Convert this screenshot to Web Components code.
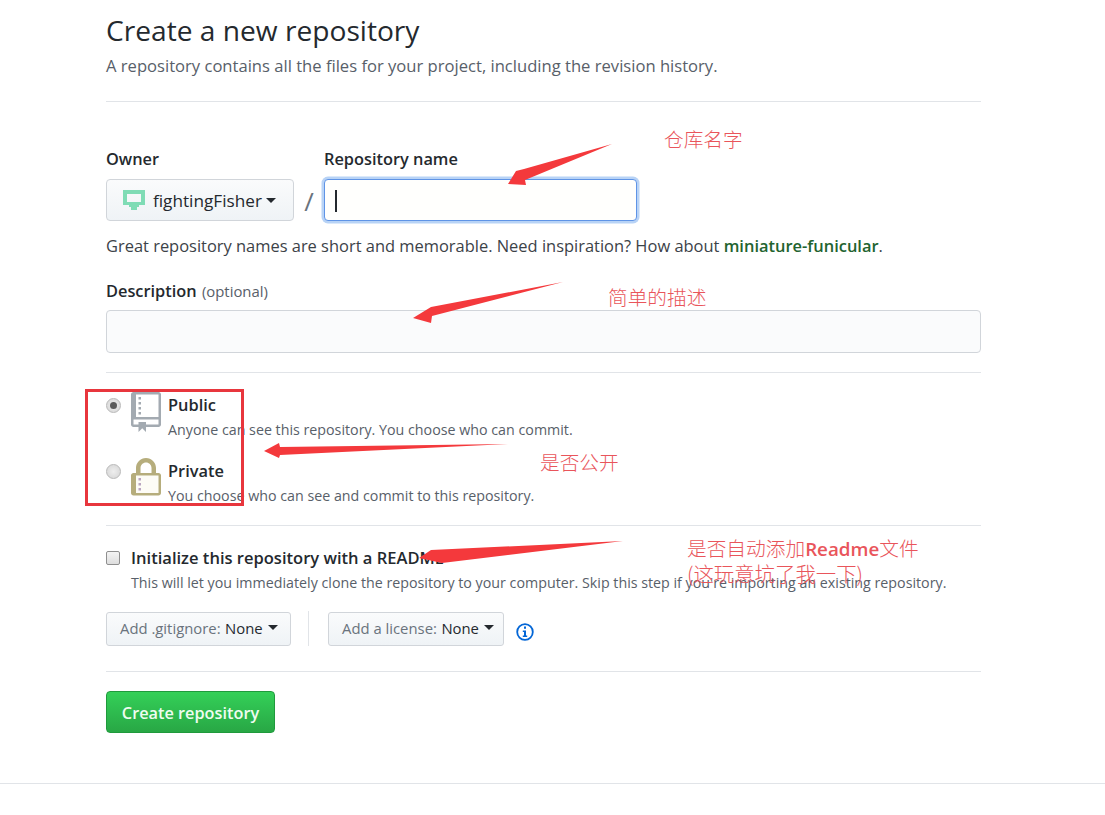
<!DOCTYPE html>
<html lang="en">
<head>
<meta charset="utf-8">
<title>Create a new repository</title>
<style>
  html, body { margin: 0; padding: 0; background: #fff; }
  body { font-family: "Open Sans", "Noto Sans CJK SC", sans-serif; color: #24292e; }
</style>
</head>
<body>
<new-repo-page></new-repo-page>

<script>
const CARET = `<span class="caret"></span>`;

class GhSelect extends HTMLElement {
  constructor() {
    super();
    this.attachShadow({ mode: "open" }).innerHTML = `
      <style>
        :host { display: inline-flex; align-items: center; box-sizing: border-box; height: 34px; padding: 0 0 2px 13px;
          border: 1px solid #d1d5da; border-radius: 3px; background: linear-gradient(#fafbfc, #eff3f6);
          font-size: 14.85px; color: #6a737d; white-space: nowrap; }
        b { font-weight: 400; color: #24292e; margin-left: 4.5px; }
        .caret { width: 0; height: 0; margin-left: 5px; border: 5px solid transparent; border-top-color: #24292e; border-bottom: 0; }
      </style>
      <slot></slot><b>${this.getAttribute("value")}</b>${CARET}`;
  }
}
customElements.define("gh-select", GhSelect);

class VisibilityOption extends HTMLElement {
  constructor() {
    super();
    const checked = this.hasAttribute("checked");
    this.attachShadow({ mode: "open" }).innerHTML = `
      <style>
        :host { display: grid; grid-template-columns: 15px 30px 1fr; column-gap: 10px; height: 66px; }
        .radio { box-sizing: border-box; width: 15px; height: 15px; margin-top: 5px; border-radius: 50%;
          border: 1px solid #b9b9b9; background: radial-gradient(#eee, #d4d4d4); display: flex; align-items: center; justify-content: center; }
        .radio i { width: 7px; height: 7px; border-radius: 50%; background: #5a5a5a; }
        .body { margin-left: -3px; }
        .title { font-size: 16.4px; font-weight: 600; line-height: 24px; margin-top: 0; }
        .note { font-size: 14.25px; line-height: 20px; margin-top: 3px; color: #586069; white-space: nowrap; }
      </style>
      <div class="radio">${checked ? "<i></i>" : ""}</div>
      <slot name="icon"></slot>
      <div class="body">
        <div class="title">${this.getAttribute("label")}</div>
        <div class="note"><slot></slot></div>
      </div>`;
  }
}
customElements.define("visibility-option", VisibilityOption);

class ReadmeCheck extends HTMLElement {
  constructor() {
    super();
    this.attachShadow({ mode: "open" }).innerHTML = `
      <style>
        :host { display: grid; grid-template-columns: 14px 1fr; column-gap: 11px; }
        .box { box-sizing: border-box; width: 14px; height: 14px; margin-top: 5px; border: 1px solid #8f8f8f; border-radius: 2px; background: linear-gradient(#f4f4f4, #dedede); }
        .title { font-size: 16.55px; font-weight: 600; line-height: 24px; white-space: nowrap; }
        .note { font-size: 14.25px; line-height: 20px; margin-top: 3px; color: #586069; white-space: nowrap; }
      </style>
      <div class="box"></div>
      <div>
        <div class="title"><slot name="title"></slot></div>
        <div class="note"><slot></slot></div>
      </div>`;
  }
}
customElements.define("readme-check", ReadmeCheck);

class NoteOverlay extends HTMLElement {
  constructor() {
    super();
    this.attachShadow({ mode: "open" }).innerHTML = `
      <style>
        :host { position: absolute; inset: 0; display: block; pointer-events: none; }
        svg { position: absolute; left: 0; top: 0; }
        .note { position: absolute; font: 300 19.7px/24px "Noto Sans CJK SC", sans-serif; color: #e9555b; white-space: nowrap; }
        .note em { font: 600 18.8px/24px "Open Sans", sans-serif; }
      </style>
      <svg width="1105" height="815" viewBox="0 0 1105 815">
        <g fill="#f4393c">
          <polygon points="612,144 524,169 516,171 508,184 526,185 525,180"/>
          <polygon points="563,282 431,307 413,318 431,323 432,316"/>
          <polygon points="508,444 280,447 279,443 264,451 279,458 280,455"/>
          <polygon points="623,541 431,550 419,558 442,563"/>
        </g>
        <rect x="86.5" y="390.5" width="156" height="114" fill="none" stroke="#e8363d" stroke-width="3"/>
      </svg>
      <div class="note" style="left:664px;top:127px">仓库名字</div>
      <div class="note" style="left:608px;top:285px">简单的描述</div>
      <div class="note" style="left:540px;top:450px">是否公开</div>
      <div class="note" style="left:687px;top:536px">是否自动添加<em>Readme</em>文件</div>
      <div class="note" style="left:687px;top:561px;font-size:20.4px">(这玩意坑了我一下)</div>`;
  }
}
customElements.define("note-overlay", NoteOverlay);

class NewRepoPage extends HTMLElement {
  constructor() {
    super();
    this.attachShadow({ mode: "open" }).innerHTML = `
      <style>
        :host { display: block; position: relative; height: 815px; overflow: hidden; }
        .wrap { width: 875px; margin-left: 106px; padding-top: 10px; }
        h1 { margin: 0; font-size: 28.15px; font-weight: 400; line-height: 41px; }
        .sub { margin: 3px 0 0; font-size: 16.6px; line-height: 24px; color: #586069; white-space: nowrap; }
        hr { border: 0; height: 1px; background: #e1e4e8; margin: 0; }
        .label { font-size: 16.35px; font-weight: 600; line-height: 20px; white-space: nowrap; }
        .label small { font-size: 14.9px; font-weight: 400; color: #586069; margin-left: 1px; }
        .names { display: flex; margin-top: 47px; }
        .slash { align-self: flex-end; width: 30px; height: 42px; font-size: 26px; line-height: 44px; text-align: center; color: #6a737d; }
        .field { display: grid; row-gap: 10px; }
        .owner { display: flex; align-items: center; box-sizing: border-box; width: 188px; height: 42px; padding-left: 16px;
          border: 1px solid #d1d5da; border-radius: 4px; background: linear-gradient(#fafbfc, #eff3f6); font-size: 17.2px; }
        .owner svg { margin-right: 8px; }
        .owner .caret { margin-left: 4px; width: 0; height: 0; border: 5px solid transparent; border-top-color: #24292e; border-bottom: 0; }
        .name { box-sizing: border-box; width: 313px; height: 42px; padding: 10px; border: 1.5px solid #5f94e6; border-radius: 4px;
          background: #fffffd; box-shadow: 0 0 0 2.5px #b8d3f6; }
        .name i { display: block; width: 1.5px; height: 22px; background: #24292e; }
        .hint { margin: 15px 0 0; font-size: 16.45px; line-height: 20px; color: #3c4248; white-space: nowrap; }
        .hint b { color: #22632f; font-weight: 600; }
        .desc-label { margin-top: 25px; }
        .desc { box-sizing: border-box; height: 43px; margin-top: 9px; border: 1px solid #d1d5da; border-radius: 4px; background: #fafbfc; }
        .rule-desc { margin-top: 19px; }
        .options { padding-top: 20px; height: 132px; }
        readme-check { margin-top: 20px; }
        .extras { display: flex; align-items: center; margin-top: 18px; height: 35px; }
        .sep { width: 1px; height: 35px; margin: 0 19px 0 17px; background: #e1e4e8; }
        .extras svg { margin: 6px 0 0 12px; }
        .rule-submit { margin-top: 25px; }
        .create { display: flex; align-items: center; justify-content: center; box-sizing: border-box; width: 169px; height: 42px; margin-top: 19px; padding-top: 2px;
          border-radius: 4px; border: 1px solid #1f9a3c; background: linear-gradient(#34d058, #28a745); color: #eefcf0; font-size: 16.3px; font-weight: 600; }
        .foot { position: absolute; left: 0; right: 0; top: 783px; }
      </style>
      <div class="wrap">
        <h1>Create a new repository</h1>
        <p class="sub">A repository contains all the files for your project, including the revision history.</p>
        <hr style="margin-top:23px">
        <div class="names">
          <div class="field">
            <div class="label">Owner</div>
            <div class="owner">
              <svg width="22" height="21" viewBox="0 0 22 21"><path fill="#7fdcb5" d="M0 0h22v15h-6v2h-2v3H8v-3H6v-2H0zM4 4v8h14V4z"/></svg>
              fightingFisher<span class="caret"></span>
            </div>
          </div>
          <div class="slash">/</div>
          <div class="field">
            <div class="label">Repository name</div>
            <div class="name"><i></i></div>
          </div>
        </div>
        <p class="hint">Great repository names are short and memorable. Need inspiration? How about <b>miniature-funicular</b>.</p>
        <div class="label desc-label">Description <small>(optional)</small></div>
        <div class="desc"></div>
        <hr class="rule-desc">
        <div class="options">
          <visibility-option label="Public" checked>
            <svg slot="icon" width="30" height="40" viewBox="0 0 12 16" style="display:block;margin-top:-1px"><path fill="#a3aab1" d="M4 9H3V8h1v1zm0-3H3v1h1V6zm0-2H3v1h1V4zm0-2H3v1h1V2zm8-1v12c0 .55-.45 1-1 1H6v2l-1.5-1.5L3 16v-2H1c-.55 0-1-.45-1-1V1c0-.55.45-1 1-1h10c.55 0 1 .45 1 1zm-1 10H1v2h2v-1h3v1h5v-2zm0-10H2v9h9V1z"/></svg>
            Anyone can see this repository. You choose who can commit.
          </visibility-option>
          <visibility-option label="Private">
            <svg slot="icon" width="30" height="40" viewBox="0 0 12 16" style="display:block;margin-top:-1px"><path fill="#fdfcf6" d="M2 7h9v7H2z"/><path fill="#b6ad7c" d="M12 7v7c0 .55-.45 1-1 1H1c-.55 0-1-.45-1-1V7c0-.55.45-1 1-1h1V4c0-2.2 1.8-4 4-4s4 1.8 4 4v2h1c.55 0 1 .45 1 1zM3.8 6h4.41V4c0-1.22-.98-2.2-2.2-2.2-1.22 0-2.2.98-2.2 2.2v2H3.8zM11 7H2v7h9V7z"/><path fill="#b9a5c0" d="M4 13H3v-1h1v1zM4 8H3v1h1V8zm0 2H3v1h1v-1z"/></svg>
            You choose who can see and commit to this repository.
          </visibility-option>
        </div>
        <hr>
        <readme-check>
          <span slot="title">Initialize this repository with a README</span>
          This will let you immediately clone the repository to your computer. Skip this step if you're importing an existing repository.
        </readme-check>
        <div class="extras">
          <gh-select value="None" style="width:185px">Add .gitignore:</gh-select>
          <div class="sep"></div>
          <gh-select value="None" style="width:176px">Add a license:</gh-select>
          <svg width="18" height="18" viewBox="0 0 18 18"><circle cx="9" cy="9" r="7.8" fill="none" stroke="#0366d6" stroke-width="1.8"/><path fill="#0366d6" d="M8 3.6h2v2.2H8zM6.8 7.4H10v5h1.2v1.6H6.8v-1.6H8V9H6.8z"/></svg>
        </div>
        <hr class="rule-submit">
        <div class="create">Create repository</div>
      </div>
      <hr class="foot">
      <note-overlay></note-overlay>`;
  }
}
customElements.define("new-repo-page", NewRepoPage);
</script>
</body>
</html>
